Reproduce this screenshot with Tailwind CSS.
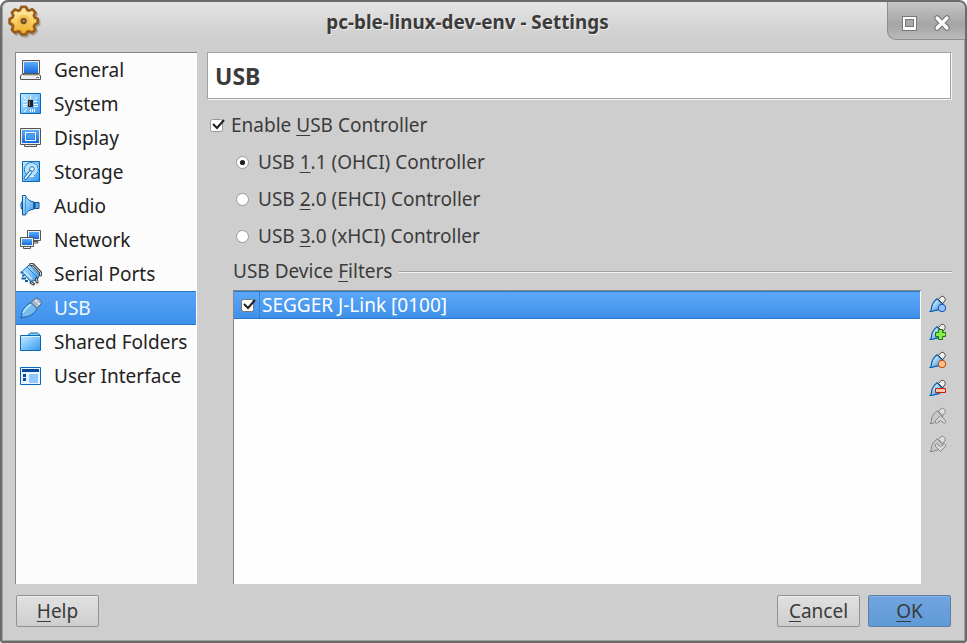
<!DOCTYPE html>
<html lang="en"><head><meta charset="utf-8"><title>pc-ble-linux-dev-env - Settings</title>
<script src="https://cdn.jsdelivr.net/npm/@tailwindcss/browser@4"></script></head>
<body class="bg-white">
<svg class="absolute w-0 h-0" aria-hidden="true"><defs>
<linearGradient id="blue" x1="0" y1="0" x2="0" y2="1"><stop offset="0" stop-color="#58adff"/><stop offset="1" stop-color="#176bdc"/></linearGradient>
<linearGradient id="light" x1="0" y1="0" x2="1" y2="1"><stop offset="0" stop-color="#c8edff"/><stop offset="1" stop-color="#3597f3"/></linearGradient>
<linearGradient id="plug" x1="0" y1="0" x2="1" y2="1"><stop offset=".2" stop-color="#e4f7ff"/><stop offset="1" stop-color="#1478d8"/></linearGradient>
<linearGradient id="gold" x1="0" y1="0" x2="0" y2="1"><stop offset="0" stop-color="#fff3b8"/><stop offset=".5" stop-color="#fbd067"/><stop offset="1" stop-color="#f0a81c"/></linearGradient>
<symbol id="stick" viewBox="0 0 18 18"><path d="M1 16.500 2.500 14.500C2 11 4 7.500 8 3.800l6 5.700c-1.500 4-4.500 6-8.500 6.200L3 16.500z" fill="url(#plug)" stroke="#0b63ae" stroke-width="1.200"/><path d="m9.500 4.500 2.500-2.800c1.700-1.400 5.200 1 4 3.700l-2.200 3.300z" fill="#f4f4f4" stroke="#3c3c3c"/></symbol>
<symbol id="stickgray" viewBox="0 0 18 18"><path d="M1 16.500 2.500 14.500C2 11 4 7.500 8 3.800l6 5.700c-1.500 4-4.500 6-8.500 6.200L3 16.500z" fill="#c9c9c9" stroke="#858585"/><path d="m9.500 4.500 2.500-2.800c1.700-1.400 5.200 1 4 3.700l-2.200 3.300z" fill="#dedede" stroke="#858585"/></symbol>
</defs></svg>
<div class="w-[967px] h-[643px] flex flex-col overflow-hidden rounded-t-[8px] rounded-b-[3px] border-2 border-[#6b6b6b] bg-[#cecece] font-['Noto_Sans',sans-serif] text-[19.03px] leading-[26px] text-[#3b3b3b] shadow-[inset_0_0_0_1px_#a0a0a0]">
<header class="h-[50px] shrink-0 flex rounded-t-[6px] shadow-[inset_1px_0_0_#a0a0a0,inset_-1px_0_0_#a0a0a0] bg-linear-to-b from-[#e5e5e5] via-[#d3d3d3] via-55% to-[#cecece] to-75%">
 <div class="w-[80px] pl-[6px] pt-[3px]"><svg width="34" height="34" viewBox="0 0 38 38"><path d="m15 2 5 0 1.500 3.500 2 .8 3.500-1.600 3.500 3.500-1.600 3.600.9 2.200 3.400 1.400v4.800L29.800 22l-.9 2 1.600 3.600-3.500 3.300-3.600-1.600-2.200.9-1.400 2.800h-4.900l-1.400-2.800-2.200-.9L7.800 31l-3.500-3.400L5.900 24 5 22l-3.200-1.600v-4.800L5 14.100l.9-2.200-1.600-3.500L7.800 5l3.600 1.500 2.200-.9z" transform="translate(1.500 1.800)" fill="#766a5a" stroke="#766a5a" stroke-width="3" stroke-linejoin="round" opacity=".5"/><path d="m15 2 5 0 1.500 3.500 2 .8 3.500-1.600 3.500 3.500-1.600 3.600.9 2.200 3.400 1.400v4.800L29.800 22l-.9 2 1.600 3.600-3.500 3.300-3.600-1.600-2.200.9-1.400 2.800h-4.900l-1.400-2.800-2.200-.9L7.800 31l-3.500-3.400L5.900 24 5 22l-3.200-1.600v-4.800L5 14.100l.9-2.200-1.600-3.500L7.800 5l3.600 1.500 2.200-.9z" fill="url(#gold)" stroke="#9a5c1c" stroke-width="3" stroke-linejoin="round"/><circle cx="17.500" cy="18" r="7" fill="#efb94a" opacity=".7"/><circle cx="17.500" cy="18" r="2.500" fill="#a88a50" stroke="#70491d" stroke-width="2"/></svg></div>
 <h1 class="flex-1 pt-[7px] pr-[34px] text-center text-[18.86px] font-bold whitespace-nowrap [text-shadow:1px_1px_0_#fff9]">pc-ble-linux-dev-env - Settings</h1>
 <div class="w-[78px] h-[38px] flex items-center gap-[14px] pl-[12px] pt-[4px] rounded-bl-[9px] rounded-tr-[6px] border-l border-b border-[#8e8e8e] bg-linear-to-b from-[#c5c5c5] via-[#a5a5a5] via-60% to-[#bababa]">
 <svg width="18" height="18" viewBox="0 0 18 18"><path d="M2 2h15v15H2z" fill="#777"/><path d="M3 3h13v13H3z" fill="#fff"/><path d="M5 5h9v8H5z" fill="#777"/><path d="M6 6h7v6H6z" fill="#aaa"/></svg>
 <svg width="20" height="20" viewBox="0 0 20 20"><path d="m5 5 10 10M15 5 5 15" stroke="#777" stroke-width="5.500" stroke-linecap="round"/><path d="m5 5 10 10M15 5 5 15" stroke="#fff" stroke-width="3.200" stroke-linecap="round"/></svg></div>
</header>
<main class="h-[532px] shrink-0 flex pl-[13px] pr-[13px]">
 <nav class="w-[182px] shrink-0 border-l border-t border-[#888] bg-[#fcfcfc] text-[#222]">
 <div class="h-[34px] flex items-center gap-[11px] pl-[3px]"><svg width="24" height="24" viewBox="0 0 24 24"><path d="M3.500 2.500h17v13h-17z" fill="#eee" stroke="#555"/><path d="M5 4h14v11H5z" fill="url(#blue)"/><path d="M1.500 17.500l2-1h16l2 1v4h-20z" fill="#eee" stroke="#555"/><path d="M5 17h14" stroke="#aaa"/><path d="M17 19.500h3" stroke="#777"/></svg><span>General</span></div>
 <div class="h-[34px] flex items-center gap-[11px] pl-[3px]"><svg width="24" height="24" viewBox="0 0 24 24"><path d="M1.500 1.500h20v20h-20z" fill="url(#light)" stroke="#0969b9"/><path d="M9 8h5v7H9z" fill="#222"/><path d="M10.500 9v5" stroke="#777"/><path d="M4 9.500h4M4 12.500h4M4 14.500h4M15 9.500h3M15 12.500h4M15 14.500h4M11.500 4v3M11.500 17v3M13.500 17v3M15.500 17v3m0-12 3-3M8 17l-3 3M5 5l3 3" stroke="#fff"/></svg><span>System</span></div>
 <div class="h-[34px] flex items-center gap-[11px] pl-[3px]"><svg width="24" height="24" viewBox="0 0 24 24"><path d="M1.500 2.500h20v16h-20z" fill="#eee" stroke="#555"/><path d="M3 4h17v13H3z" fill="url(#blue)"/><path d="M6.500 6.500h10v8h-10z" fill="none" stroke="#fff"/><path d="M8 8h7v5H8z" fill="#459df6"/><path d="M5.500 18.500h12v2h-12z" fill="#eee" stroke="#555"/></svg><span>Display</span></div>
 <div class="h-[34px] flex items-center gap-[11px] pl-[3px]"><svg width="24" height="24" viewBox="0 0 24 24"><path d="M3.500 1.500h17v20h-17z" fill="url(#light)" stroke="#0969b9"/><circle cx="12.500" cy="9.500" r="7" fill="#b9e3ff" stroke="#fff"/><path d="M8 15a7 7 0 1 1 7 1" fill="none" stroke="#1674b9"/><circle cx="13" cy="9" r="2.300" fill="#fff" stroke="#1674b9"/><path d="m11.500 12-5 6" stroke="#1674b9" stroke-width="3.600" stroke-linecap="round"/><path d="m11.500 12-5 6" stroke="#eaf8ff" stroke-width="1.800" stroke-linecap="round"/></svg><span>Storage</span></div>
 <div class="h-[34px] flex items-center gap-[11px] pl-[3px]"><svg width="24" height="24" viewBox="0 0 24 24"><path d="M14 8.500h6v6h-6z" fill="#57a9ed" stroke="#155694"/><path d="M3.500 1.500h3c1 3 4 6 8.500 6.500v7c-4.500.5-7.500 3-8.500 6h-3z" fill="url(#light)" stroke="#0b579d"/><path d="M3.500 8h-1l-.7 3.500.7 3.500h1z" fill="#79c2ff" stroke="#0b579d"/><path d="M6.500 3v17" stroke="#4795d3"/><path d="M15.500 8v7" stroke="#14548c" stroke-width="2"/></svg><span>Audio</span></div>
 <div class="h-[34px] flex items-center gap-[11px] pl-[3px]"><svg width="24" height="24" viewBox="0 0 24 24"><path d="M8.500 2.500h13v10h-13z" fill="#eee" stroke="#555"/><path d="M10 4h10v7H10z" fill="url(#blue)"/><path d="M14 13.500h5v1.500h-5" fill="#eee" stroke="#555"/><path d="M1.500 9.500h13v9h-13z" fill="#eee" stroke="#555"/><path d="M3 11h10v6H3z" fill="url(#blue)"/><path d="M4.500 18.500h7v2h-7z" fill="#eee" stroke="#555"/></svg><span>Network</span></div>
 <div class="h-[34px] flex items-center gap-[11px] pl-[3px]"><svg width="24" height="24" viewBox="0 0 24 24"><path d="M4 10.500H1.500M5.500 13.500H3M7 16.500H2.500M9 19H6" stroke="#0763ad" stroke-width="2"/><path d="M3 9.500 10.500 2.500 20.500 13 18 18l-6.500 1.500z" fill="url(#light)" stroke="#0763ad" stroke-linejoin="round"/><path d="M8 5 18 15" stroke="#2a83cf"/><path d="m5 10 8 7" stroke="#d8f2ff" stroke-width="1.500"/><path d="M11.500 2.500h2.500l7.500 8v2.500" fill="none" stroke="#444" stroke-width="3" stroke-linecap="round" stroke-linejoin="round"/><path d="M11.500 2.500h2.500l7.500 8v2.500" fill="none" stroke="#ddd" stroke-linecap="round"/><path d="m17.500 16.500.5 3.500M12 20.500l2.500 1.500" stroke="#444" stroke-width="3" stroke-linecap="round"/><path d="m17.500 16.500.5 3.500M12 20.500l2.500 1.500" stroke="#ddd"/></svg><span>Serial Ports</span></div>
 <div class="h-[34px] mr-px flex items-center gap-[11px] pl-[3px] border-y border-[#2c76c5] bg-linear-to-b from-[#57a2f8] to-[#3d91ea] text-[#f4faff]"><svg width="24" height="24" viewBox="0 0 24 24"><path d="M1.500 22 3 19.500C1.500 16 6 9.500 12 6.500l6 6C16 17 10 21.500 5 21z" fill="#75bdf1" stroke="#225f9d"/><path d="M4 17c2-4 5-7 8-8.500" fill="none" stroke="#b9e4ff" stroke-width="1.500"/><path d="m12 6.500 4.500-4.500c2-.8 6.800 3.500 5.800 5.500L18 12.500z" fill="#a8b8cc" stroke="#4b6788"/><path d="m16.500 4.500 1.500 1.500m1 1 1.500 1.500" stroke="#fff" stroke-width="1.500"/></svg><span>USB</span></div>
 <div class="h-[34px] flex items-center gap-[11px] pl-[3px]"><svg width="24" height="24" viewBox="0 0 24 24"><path d="M9.500 6V4.500l2-1.500h7l2 1.500V7" fill="#8ad5ff" stroke="#0868ad"/><path d="M1.500 5.500h20v15h-20z" fill="url(#light)" stroke="#0868ad"/><path d="M2 6.500h19" stroke="#d5f5ff"/></svg><span>Shared Folders</span></div>
 <div class="h-[34px] flex items-center gap-[11px] pl-[3px]"><svg width="24" height="24" viewBox="0 0 24 24"><path d="M1.500 3.500h20v17h-20z" fill="#e9f5ff" stroke="#0868bd"/><path d="M3 5h17v3H3z" fill="#0849a0"/><path d="M4 10h3v3H4zM4 14h3v3H4z" fill="#0849a0"/><path d="M10 10h9v9h-9z" fill="#93c7ff"/></svg><span>User Interface</span></div>
 </nav>
 <section class="ml-[10px] flex-1 min-w-0 flex flex-col">
  <h2 class="h-[47px] shrink-0 mr-[1px] pl-[7px] pt-[6px] border border-[#a2a2a2] bg-white shadow-[1px_1px_0_#f5f5f5] text-[23px] leading-[34px] font-bold">USB</h2>
  <div class="mt-[8px] h-[36px] flex items-center pl-[3px] gap-[5px]"><svg width="16" height="16" viewBox="0 0 16 16"><rect x=".5" y="2.500" width="12" height="12" rx="2" fill="#fff" stroke="#989898"/><path d="m3 7 4 4 7-8" fill="none" stroke="#222" stroke-width="2"/></svg><span>Enable <u class="decoration-1 underline-offset-[3px]">U</u>SB Controller</span></div>
  <div class="h-[37px] flex items-center pl-[29px] gap-[8px]"><svg width="14" height="14" viewBox="0 0 14 14"><circle cx="6.500" cy="7.500" r="6" fill="#fff" stroke="#999"/><circle cx="6.500" cy="7.500" r="2.600" fill="#222"/></svg><span>USB <u class="decoration-1 underline-offset-[3px]">1</u>.1 (OHCI) Controller</span></div>
  <div class="h-[37px] flex items-center pl-[29px] gap-[8px]"><svg width="14" height="14" viewBox="0 0 14 14"><circle cx="6.500" cy="7.500" r="6" fill="#fff" stroke="#999"/></svg><span>USB <u class="decoration-1 underline-offset-[3px]">2</u>.0 (EHCI) Controller</span></div>
  <div class="h-[37px] flex items-center pl-[29px] gap-[8px]"><svg width="14" height="14" viewBox="0 0 14 14"><circle cx="6.500" cy="7.500" r="6" fill="#fff" stroke="#999"/></svg><span>USB <u class="decoration-1 underline-offset-[3px]">3</u>.0 (xHCI) Controller</span></div>
  <div class="h-[36px] flex items-center pl-[26px] gap-[7px] pb-[2px]"><span class="whitespace-nowrap">USB Device <u class="decoration-1 underline-offset-[3px]">F</u>ilters</span><div class="flex-1 h-[2px] mt-[2px] bg-[#a2a2a2] border-b border-[#f5f5f5]"></div></div>
  <div class="flex-1 flex pl-[26px]">
   <div class="w-[688px] shrink-0 bg-[#fdfdfd] border-t border-l border-[#888]">
    <div class="h-[28px] mr-px flex items-center pl-[7px] border-y border-[#2779cb] bg-linear-to-b from-[#5ba7fa] to-[#3e91e8] text-white"><svg width="16" height="16" viewBox="0 0 16 16"><rect x=".5" y="2.500" width="12" height="12" rx="2" fill="#fff" stroke="#777"/><path d="m3 7 4 4 7-8" fill="none" stroke="#222" stroke-width="2"/></svg><span class="ml-[2px] pl-[2px] border-l border-dotted border-[#376797]">SEGGER J-Link [0100]</span></div>
   </div>
   <div class="flex-1 flex flex-col items-center gap-[10px] pt-[5px] pl-[2px]">
    <svg width="18" height="18"><use href="#stick" width="18" height="18"/><circle cx="13" cy="13" r="3.700" fill="#91c5ff" stroke="#1750aa"/></svg>
    <svg width="18" height="18"><use href="#stick" width="18" height="18"/><path d="M9.500 6.500h4v3h3v4h-3v3h-4v-3h-3v-4h3z" fill="#85ed45" stroke="#23750d"/></svg>
    <svg width="18" height="18"><use href="#stick" width="18" height="18"/><circle cx="13" cy="13" r="3.700" fill="#ffc485" stroke="#b94510"/></svg>
    <svg width="18" height="18"><use href="#stick" width="18" height="18"/><path d="M6.500 9.500h10v4h-10z" fill="#ffc2ae" stroke="#bc2608"/></svg>
    <svg width="18" height="18"><use href="#stickgray" width="18" height="18"/><path d="m11.500 8.500 5 5v2l-1 1-4-3-4 3-1-1v-2z" fill="#d5d5d5" stroke="#8a8a8a"/></svg>
    <svg width="18" height="18"><use href="#stickgray" width="18" height="18"/><path d="m6.500 9.500 1-1 4 3 4-3 1 1v2l-5 5-5-5z" fill="#d5d5d5" stroke="#8a8a8a"/></svg>
   </div>
  </div>
 </section>
</main>
<footer class="flex pt-[11px] pl-[14px] pr-[14px]">
 <button class="w-[83px] h-[32px] rounded-[2px] border border-[#929292] bg-linear-to-b from-[#e1e1e1] to-[#cecece] shadow-[inset_0_1px_0_#eee]"><u class="decoration-1 underline-offset-[3px]">H</u>elp</button>
 <button class="ml-auto w-[83px] h-[32px] rounded-[2px] border border-[#929292] bg-linear-to-b from-[#e1e1e1] to-[#cecece] shadow-[inset_0_1px_0_#eee]"><u class="decoration-1 underline-offset-[3px]">C</u>ancel</button>
 <button class="ml-[8px] w-[83px] h-[32px] rounded-[2px] border border-[#617e9b] bg-linear-to-b from-[#70a5e0] to-[#6099d7] shadow-[inset_0_1px_0_#82b5ed]"><u class="decoration-1 underline-offset-[3px]">O</u>K</button>
</footer>
</div></body></html>
